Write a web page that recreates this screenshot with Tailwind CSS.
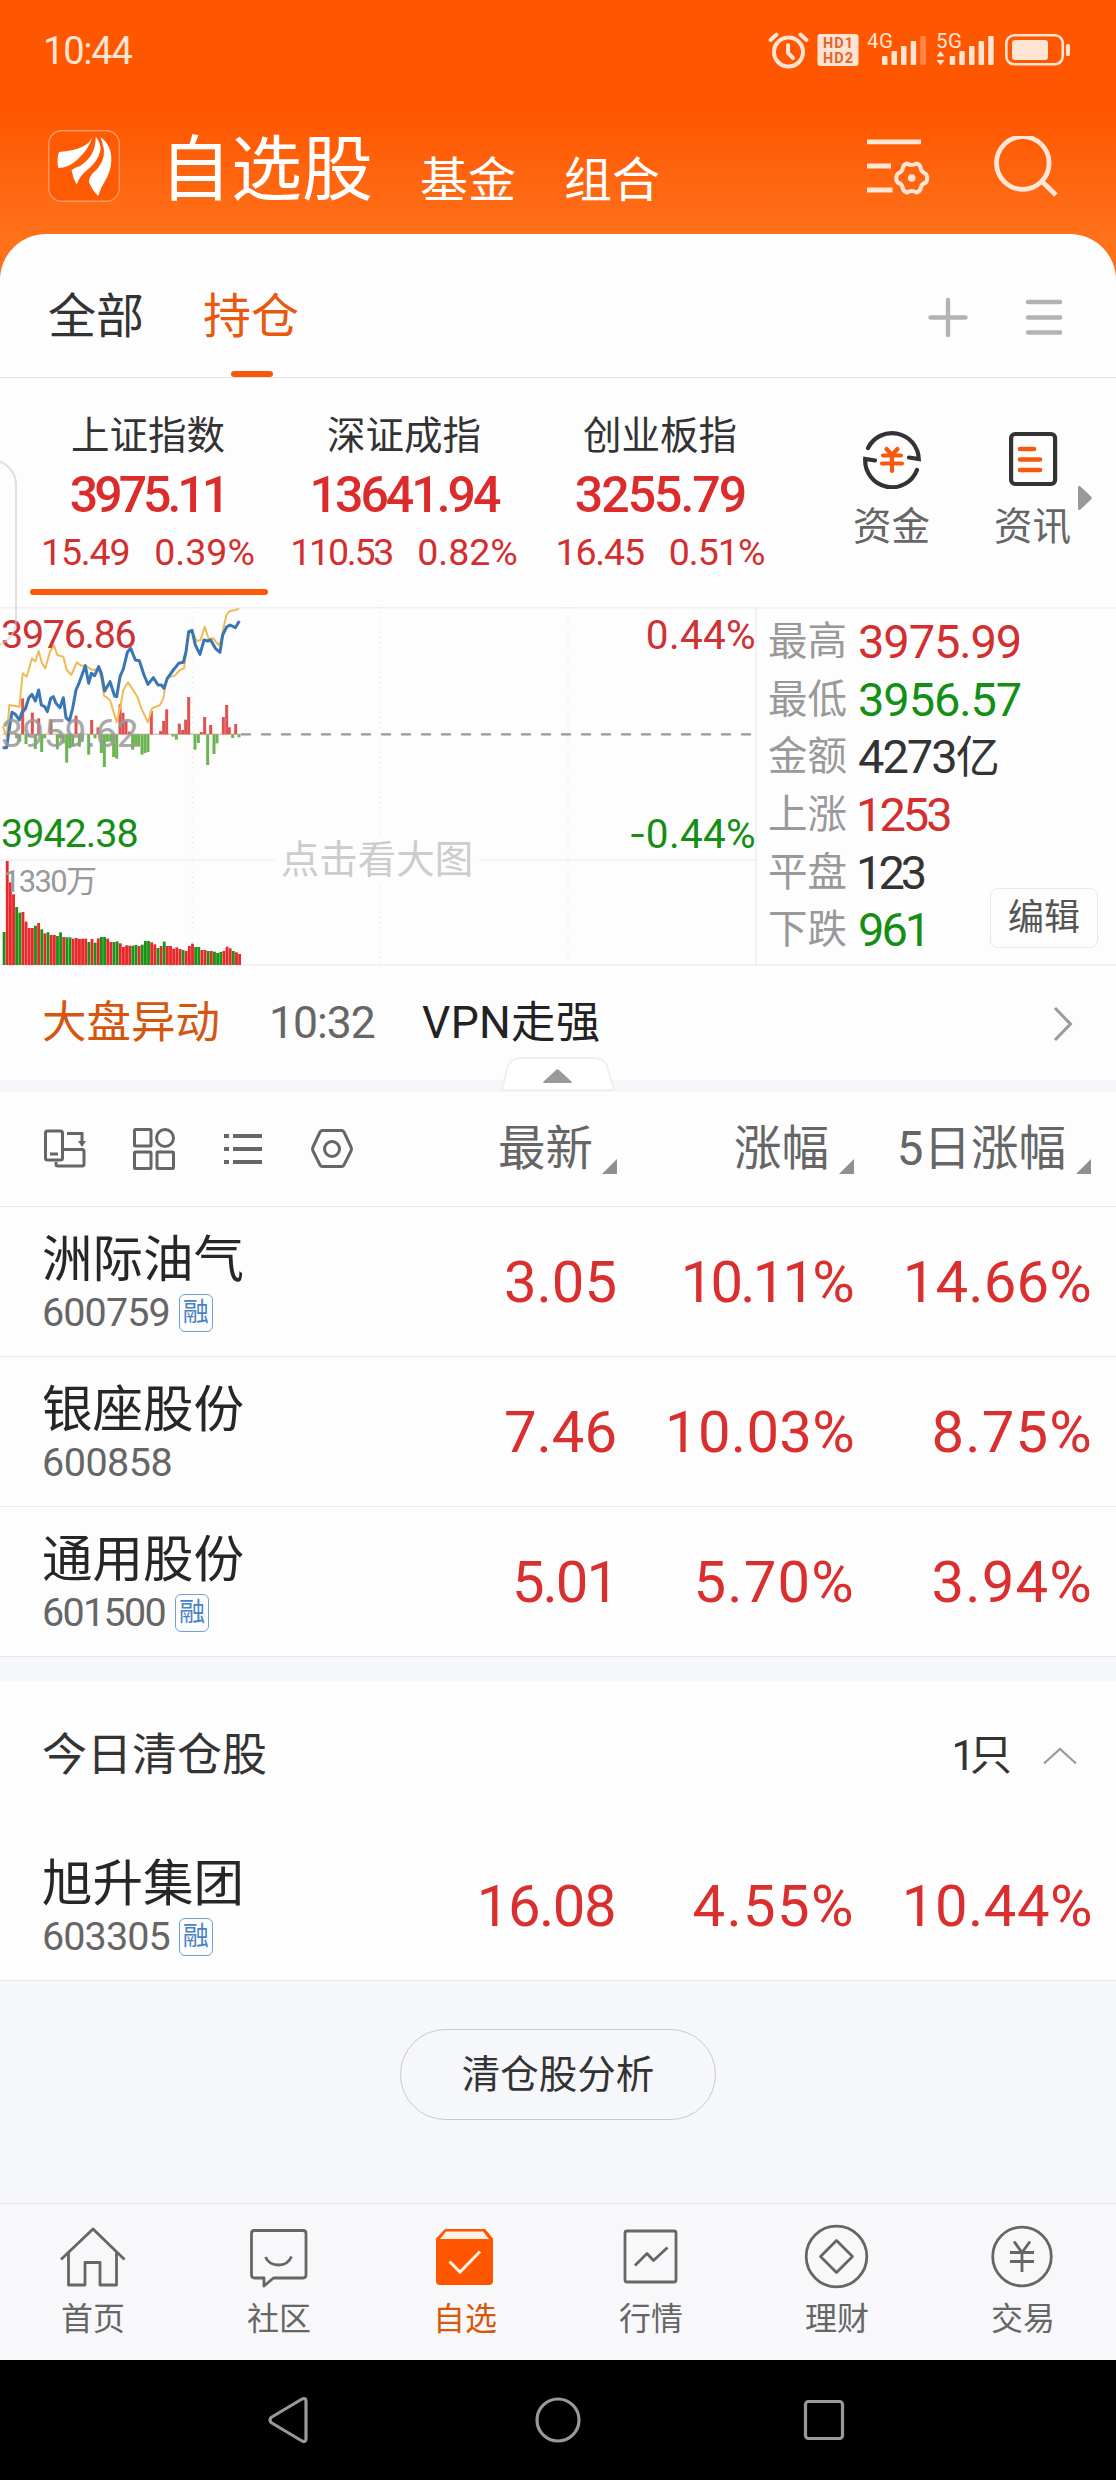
<!DOCTYPE html>
<html lang="zh-CN">

<head>
    <meta charset="UTF-8" />
    <meta name="viewport" content="width=device-width, initial-scale=1.0" />
    <title>自选股</title>
    <script src="https://cdn.jsdelivr.net/npm/@tailwindcss/browser@4"></script>
</head>

<body class="w-[1116px] h-[2480px] overflow-hidden bg-white text-[#333] font-['Roboto','Noto_Sans_CJK_SC',sans-serif] whitespace-nowrap">

    <!-- Header -->
    <header class="h-[280px] bg-linear-to-b from-[#ff5600] from-40% to-[#ff7119] to-85%">
        <div class="h-[100px] pl-[43px] pr-[45px] flex items-center justify-between text-[#ffe3d3]">
            <span class="pt-[2px] text-[38px] leading-[100px] tracking-[-1.2px]">10:44</span>
            <svg class="w-[304px] h-[40px]" viewBox="768 29 304 40" fill="none">
                <g stroke="#ffe3d3" stroke-width="4" stroke-linecap="round" stroke-linejoin="round">
                    <circle cx="789.5" cy="51" r="14.5" />
                    <path d="M789 44v8l5 5" />
                    <path d="M771.500 39l6-5.500M807.500 39l-6-5.500" />
                </g>
                <rect x="818.500" y="33" width="41" height="32" rx="3" fill="#ffe3d3" />
                <g fill="#e8632a" font-family="Roboto" font-weight="700" font-size="14.500">
                    <text x="824" y="47" textLength="30">HD1</text>
                    <text x="824" y="61.500" textLength="30">HD2</text>
                </g>
                <g fill="#ffe3d3">
                    <text x="868" y="46.500" font-family="Roboto" font-size="20.500" textLength="26">4G</text>
                    <text x="937" y="46.500" font-family="Roboto" font-size="20.500" textLength="26">5G</text>
                    <rect x="883" y="55" width="5.500" height="9" rx="1" />
                    <rect x="892.500" y="50" width="5.500" height="14" rx="1" />
                    <rect x="902" y="45" width="5.500" height="19" rx="1" />
                    <rect x="911.700" y="40" width="5.500" height="24" rx="1" />
                    <rect x="921.400" y="35" width="5.500" height="29" rx="1" opacity=".35" />
                    <path d="M941.500 50l4 5.500h-8zM941.500 64.500l4-5.500h-8z" />
                    <rect x="950.700" y="55" width="5.500" height="9" rx="1" />
                    <rect x="960.300" y="50" width="5.500" height="14" rx="1" />
                    <rect x="970" y="45" width="5.500" height="19" rx="1" />
                    <rect x="979.600" y="40" width="5.500" height="24" rx="1" />
                    <rect x="989.200" y="35" width="5.500" height="29" rx="1" />
                    <rect x="1013" y="39" width="36" height="20" rx="3" />
                    <rect x="1067" y="43" width="4" height="12" rx="1.500" />
                </g>
                <rect x="1007.300" y="34.300" width="56.500" height="29" rx="8" stroke="#ffe3d3" stroke-width="2.600" />
            </svg>
        </div>
        <div class="h-[134px] pl-[48px] pr-[58px] flex text-white">
            <svg class="mt-[30px] w-[72px] h-[72px]" viewBox="48 130 72 72">
                <rect x="48.700" y="130.700" width="70.600" height="70.600" rx="13" fill="#ff5a04" stroke="#ff9a66" stroke-width="1.400" />
                <g fill="#fff">
                    <path d="M92.500 137Q87 150 59 152Q56.500 159 58.300 168Q68 168 77 160Q89 149 92.500 137Z" />
                    <path d="M95.700 136.500Q101 143 100.500 150Q98 162 86 171Q80 176 76.500 184.500Q73 178 71.500 170Q76 167 80 166Q96 156 95.700 136.500Z" />
                    <path d="M100.300 137Q112 145 111.300 161Q111 171 105 181Q101 187 98.200 196Q92 190 89 182Q89 177 93 173Q105 163 104 150Q103 143 100.300 137Z" />
                </g>
            </svg>
            <h1 class="ml-[40px] mt-[20px] w-[215px] text-[71px] leading-[100px]">自选股</h1>
            <span class="ml-[45px] mt-[31px] text-[48px] leading-[100px]">基金</span>
            <span class="ml-[48px] mt-[31px] text-[48px] leading-[100px]">组合</span>
            <svg class="ml-auto mt-[36px] w-[192px] h-[64px]" viewBox="866 136 192 64" fill="none" stroke="#ffe6d6" stroke-width="4.800">
                <path d="M867 141.800h54M867 166h24M867 190h25.500" />
                <path d="M907 163.500Q911.700 166.500 916.500 163.500Q920.500 164.500 921 169.500Q922 172 926 174Q928.500 178 926 182.500Q921.500 184 921 187Q920.500 191.500 916.500 192.500Q911.700 189.500 907 192.500Q903 191.500 902.500 187Q902 184 897.500 182.500Q895 178 897.500 174Q901.500 172 902.500 169.500Q903 164.500 907 163.500Z" stroke-width="4" stroke-linejoin="round" />
                <circle cx="911.700" cy="178" r="3.800" fill="#ffe6d6" stroke="none" />
                <circle cx="1022.800" cy="163" r="26.300" />
                <path d="M1042 181.500l14 13.500" />
            </svg>
        </div>
    </header>

    <main class="-mt-[46px] h-[1969px] relative bg-[#fdfdfe] rounded-t-[46px]">
        <!-- Group tabs -->
        <nav class="h-[144px] pl-[48px] pr-[54px] flex border-b border-[#e3e3e3]">
            <span class="mt-[33px] text-[48px] leading-[100px]">全部</span>
            <div class="ml-[59px] relative text-[#e8590f]">
                <span class="block mt-[33px] text-[48px] leading-[100px]">持仓</span>
                <i class="absolute left-[28px] top-[137px] w-[42px] h-[6px] rounded-full bg-[#f55a0c]"></i>
            </div>
            <svg class="ml-auto mt-[63px] w-[134px] h-[40px]" viewBox="928 297 134 40" fill="none" stroke="#b3b3b3" stroke-width="4.400" stroke-linecap="round">
                <path d="M930.500 317.500h35M948 300v35M1028 302h32M1028 317.500h32M1028 332.500h32" />
            </svg>
        </nav>

        <!-- Indices -->
        <section class="h-[228px] pl-[20px] flex text-center text-[#d32f2f]">
            <div class="w-[256px] relative">
                <h3 class="mt-[33px] text-[38.500px] leading-[50px] text-[#333]">上证指数</h3>
                <p class="mt-[7px] text-[50px] leading-[54px] font-medium tracking-[-4px] text-[#dc2b2b]">3975.11</p>
                <p class="mt-[10px] flex justify-center gap-[25px] text-[37.500px] leading-[40px]"><span class="tracking-[-1.200px]">15.49</span><span>0.39%</span></p>
                <i class="absolute left-[10px] bottom-[11px] w-[238px] h-[6px] rounded-full bg-[#fb5a0b]"></i>
            </div>
            <div class="w-[256px]">
                <h3 class="mt-[33px] text-[38.500px] leading-[50px] text-[#333]">深证成指</h3>
                <p class="mt-[7px] text-[50px] leading-[54px] font-medium tracking-[-3px] text-[#dc2b2b]">13641.94</p>
                <p class="mt-[10px] flex justify-center gap-[25px] text-[37.500px] leading-[40px]"><span class="tracking-[-2.200px]">110.53</span><span>0.82%</span></p>
            </div>
            <div class="w-[256px]">
                <h3 class="mt-[33px] text-[38.500px] leading-[50px] text-[#333]">创业板指</h3>
                <p class="mt-[7px] text-[50px] leading-[54px] font-medium tracking-[-2px] text-[#dc2b2b]">3255.79</p>
                <p class="mt-[10px] flex justify-center gap-[25px] text-[37.500px] leading-[40px]"><span class="tracking-[-1.200px]">16.45</span><span class="tracking-[-1px]">0.51%</span></p>
            </div>
            <div class="ml-[33px] w-[141px] text-[#666]">
                <svg class="mx-auto mt-[51px] w-[60px] h-[60px]" viewBox="862 429 60 60" fill="none" stroke="#333" stroke-width="4.200">
                    <path d="M868 448A26.800 26.800 0 0 1 918.800 459L909 457.500" stroke-linecap="round" />
                    <path d="M917 470A26.800 26.800 0 0 1 865.200 459L875 460.500" stroke-linecap="round" />
                    <path d="M886.500 449l5.500 6 5.500-6M883 455.500h18M882 463.500h20M892 455v16" stroke="#f55a0c" stroke-linecap="round" />
                </svg>
                <p class="mt-[13px] text-[38.500px] leading-[50px]">资金</p>
            </div>
            <div class="w-[141px] relative text-[#666]">
                <svg class="mx-auto mt-[51px] w-[60px] h-[60px]" viewBox="1003 429 60 60" fill="none" stroke="#333" stroke-width="4.200">
                    <rect x="1011.100" y="434" width="44" height="50" rx="4" />
                    <path d="M1020 449h14M1020 459.500h20M1020 470h20" stroke="#f55a0c" stroke-width="4.600" stroke-linecap="round" />
                </svg>
                <p class="mt-[13px] text-[38.500px] leading-[50px]">资讯</p>
                <svg class="absolute left-[115px] top-[107px] w-[16px] h-[26px]" viewBox="0 0 16 26"><path d="M1 2Q2 0 4 2L14 11.500Q15.500 13 14 14.500L4 24Q2 26 1 24Z" fill="#999" /></svg>
            </div>
        </section>

        <!-- Intraday chart and market stats -->
        <section class="h-[360px] flex">
            <div class="relative w-[757px]">
                <svg class="absolute left-0 top-px w-[757px] h-[359px]" viewBox="0 36 2271 1077" fill="none">
                    <g stroke="#f0f0f2" stroke-width="5">
                        <path d="M0 38H2271M0 795H2271M0 1110H2271M2268 36V1113" />
                        <path d="M577 36V1110M1141 36V1110M1704 36V1110" stroke-width="4" stroke-dasharray="3 12" stroke="#e6e6ea" />
                    </g>
                    <path d="M723 418H2256" stroke="#999" stroke-width="7" stroke-dasharray="30 30" />
                    <g id="flow"></g>
                    <path stroke="#edbc55" stroke-width="6" stroke-linejoin="round" d="M8 395L20 425L28 330L58 335L68 235L80 245L96 190L106 200L116 168L126 205L136 220L150 170L162 152L172 180L190 185L200 225L214 240L230 202L244 212L256 212L276 225L296 222L304 250L312 302L330 315L350 382L362 330L370 285L384 262L396 280L412 305L424 340L444 382L456 340L480 330L490 310L498 262L504 248L524 242L540 225L552 220L558 175L566 115L576 106L590 138L602 135L614 95L626 132L640 130L655 150L662 140L670 100L680 58L690 48L706 45L718 41" />
                    <path stroke="#3a75b4" stroke-width="9" stroke-linejoin="round" d="M8 458L20 458L28 400L36 352L46 358L58 375L66 352L76 342L86 310L96 298L106 318L116 285L124 330L134 335L142 350L152 310L160 305L168 325L180 338L190 308L198 368L208 378L218 340L228 285L238 262L256 212L266 265L274 235L284 242L296 215L304 235L314 288L330 260L344 303L350 305L360 245L370 222L382 172L392 160L406 195L418 197L432 240L444 268L460 248L474 270L484 270L492 280L502 250L520 225L536 205L550 202L558 170L566 110L576 106L586 150L600 178L612 135L624 138L632 135L646 160L660 172L668 120L680 96L690 90L706 98L718 78" />
                    <g id="volume"></g>
                </svg>
                <div class="absolute inset-x-0 top-[9px] pl-px pr-px flex justify-between text-[39.500px] leading-[40px] text-[#cf3232]"><span class="tracking-[-1.300px]">3976.86</span><span class="text-[40.500px] tracking-[0.3px]">0.44%</span></div>
                <div class="absolute left-px top-[108px] text-[39.500px] leading-[40px] tracking-[-1px] text-[#999]/85">3959.62</div>
                <div class="absolute inset-x-0 top-[208px] pl-px pr-px flex justify-between text-[39.500px] leading-[40px] text-[#148f14]"><span class="tracking-[-1px]">3942.38</span><span class="text-[40.500px] tracking-[0.3px]"><span class="inline-block mr-[2px] scale-x-125">-</span>0.44%</span></div>
                <div class="absolute left-[3px] top-[256px] text-[31px] leading-[40px] tracking-[-1.700px] text-[#999]">1330万</div>
                <div class="absolute left-[275px] top-[229px] w-[204px] bg-[#fdfdfe] text-center text-[38.500px] leading-[50px] text-[#ccc]">点击看大图</div>
            </div>
            <div class="relative grow mt-px pt-[4px] pl-[11px] text-[47px] leading-[57px] border-y-2 border-[#f2f2f4]">
                <p class="h-[57.700px] flex text-[#d32f2f]"><span class="w-[90px] text-[39.500px] text-[#999]">最高</span><span class="tracking-[-1.100px]">3975.99</span></p>
                <p class="h-[57.700px] flex text-[#148f14]"><span class="w-[90px] text-[39.500px] text-[#999]">最低</span><span class="tracking-[-1.100px]">3956.57</span></p>
                <p class="h-[57.700px] flex"><span class="w-[90px] text-[39.500px] text-[#999]">金额</span><span class="tracking-[-2px]">4273<span class="text-[44px]">亿</span></span></p>
                <p class="h-[57.700px] flex text-[#d32f2f]"><span class="w-[90px] text-[39.500px] text-[#999]">上涨</span><span class="-ml-[2px] tracking-[-3px]">1253</span></p>
                <p class="h-[57.700px] flex"><span class="w-[90px] text-[39.500px] text-[#999]">平盘</span><span class="-ml-[2px] tracking-[-4px]">123</span></p>
                <p class="h-[57.700px] flex text-[#148f14]"><span class="w-[90px] text-[39.500px] text-[#999]">下跌</span><span class="tracking-[-3px]">961</span></p>
                <button class="absolute right-[18px] bottom-[16px] w-[108px] h-[60px] rounded-lg border border-[#e8e8ea] text-[36px] leading-[59px] text-[#555]">编辑</button>
            </div>
        </section>

        <!-- Market news -->
        <section class="relative h-[114px] pl-[42px] pr-[43px] flex text-[44.500px] leading-[114px]">
            <span class="text-[#d4560f]">大盘异动</span>
            <span class="ml-[49px] w-[153px] tracking-[-1px] text-[#666]">10:32</span>
            <span class="text-[#222] tracking-[0.3px]">VPN走强</span>
            <svg class="ml-auto mt-[40px] w-[20px] h-[36px]" viewBox="0 0 20 36" fill="none" stroke="#999" stroke-width="3"><path d="M2 2l15.500 16L2 34" /></svg>
            <svg class="absolute z-10 left-[501px] top-[91px] w-[114px] h-[34px]" viewBox="0 0 114 34">
                <path d="M1 33L6 12Q9 1 20 1H93Q104 1 107 12L113 33Z" fill="#fff" stroke="#efeff2" stroke-width="2" />
                <path d="M42 25L55 13Q56.500 11.500 58 13L71 25Q71 26 69 26H44Q42 26 42 25Z" fill="#999" />
            </svg>
        </section>
        <div class="h-[12px] bg-[#f5f6f9]"></div>

        <!-- List toolbar -->
        <section class="h-[115px] pl-[43px] flex border-b border-[#e9e9eb] text-[47.500px] leading-[115px] text-[#666]">
            <svg class="mt-[35px] w-[312px] h-[44px]" viewBox="43 1127 312 44" fill="none" stroke="#666" stroke-width="3">
                <rect x="45.500" y="1131" width="17" height="29" rx="2" />
                <path d="M50 1154h8M56 1162v2.500Q56 1166 58 1166H82Q84 1166 84 1164V1151.500Q84 1149.500 82 1149.500H64M67 1133.500H82V1143" />
                <path d="M78 1141h8l-4 6z" fill="#666" stroke="none" />
                <rect x="134.500" y="1129.500" width="16.500" height="16.500" rx="1" />
                <circle cx="165" cy="1138" r="8.500" />
                <rect x="134.500" y="1152" width="16.500" height="16.500" rx="1" />
                <rect x="157" y="1152" width="16.500" height="16.500" rx="1" />
                <path d="M233 1136H262M233 1149H262M233 1162H262M224 1136h5M224 1149h5M224 1162h5" stroke-width="4" />
                <path d="M322.500 1130.500H341.500Q343 1130.500 344 1132L351 1147Q352 1149 351 1151L344 1165Q343 1166.500 341.500 1166.500H322.500Q321 1166.500 320 1165L313 1151Q312 1149 313 1147L320 1132Q321 1130.500 322.500 1130.500Z" />
                <circle cx="332" cy="1149" r="7.500" />
            </svg>
            <div class="w-[262px] flex justify-end"><span>最新</span><svg class="ml-[9px] mt-[67px] w-[15px] h-[15px]" viewBox="0 0 15 15"><path d="M15 0V15H0Z" fill="#8e8e93" /></svg></div>
            <div class="w-[237px] flex justify-end"><span>涨幅</span><svg class="ml-[10px] mt-[67px] w-[15px] h-[15px]" viewBox="0 0 15 15"><path d="M15 0V15H0Z" fill="#8e8e93" /></svg></div>
            <div class="w-[237px] flex justify-end"><span>5日涨幅</span><svg class="ml-[10px] mt-[67px] w-[15px] h-[15px]" viewBox="0 0 15 15"><path d="M15 0V15H0Z" fill="#8e8e93" /></svg></div>
        </section>

        <!-- Holdings -->
        <section class="text-[58px] text-right text-[#d92f2f]">
            <div class="h-[150px] pl-[42px] flex border-b border-[#e9e9eb] leading-[150px]">
                <div class="w-[338px] text-left">
                    <h2 class="mt-[23px] text-[50.500px] leading-[60px] text-[#262626]">洲际油气</h2>
                    <p class="flex items-center gap-[9px] text-[39.500px] leading-[46px] tracking-[-0.9px] text-[#666]">600759<span class="w-[34px] h-[38px] rounded-md border-[1.5px] border-[#6fa3d4] text-center text-[26px] leading-[34px] tracking-normal text-[#4584c4]">融</span></p>
                </div>
                <span class="w-[237px]">3.05</span><span class="w-[235px] tracking-[-2.800px]">10.11%</span><span class="w-[240px] tracking-[0.2px]">14.66%</span>
            </div>
            <div class="h-[150px] pl-[42px] flex border-b border-[#e9e9eb] leading-[150px]">
                <div class="w-[338px] text-left">
                    <h2 class="mt-[23px] text-[50.500px] leading-[60px] text-[#262626]">银座股份</h2>
                    <p class="text-[39.500px] leading-[46px] tracking-[-0.5px] text-[#666]">600858</p>
                </div>
                <span class="w-[237px]">7.46</span><span class="w-[238px] tracking-[0.3px]">10.03%</span><span class="w-[238px] tracking-[1.200px]">8.75%</span>
            </div>
            <div class="h-[150px] pl-[42px] flex border-b border-[#e9e9eb] leading-[150px]">
                <div class="w-[338px] text-left">
                    <h2 class="mt-[23px] text-[50.500px] leading-[60px] text-[#262626]">通用股份</h2>
                    <p class="flex items-center gap-[10px] text-[39.500px] leading-[46px] tracking-[-1.700px] text-[#666]">601500<span class="w-[34px] h-[38px] rounded-md border-[1.5px] border-[#6fa3d4] text-center text-[26px] leading-[34px] tracking-normal text-[#4584c4]">融</span></p>
                </div>
                <span class="w-[237px] tracking-[-2px]">5.01</span><span class="w-[238px] tracking-[1.200px]">5.70%</span><span class="w-[238px] tracking-[1.200px]">3.94%</span>
            </div>

            <div class="h-[24px] bg-[#f6f7fa]"></div>

            <!-- Closed today -->
            <div class="h-[149px] pl-[42px] pr-[39px] flex text-[45px] leading-[150px] text-[#333]">
                <span>今日清仓股</span>
                <span class="ml-auto text-[42px] tracking-[-5px]">1只</span>
                <svg class="ml-[36px] mt-[66px] w-[34px] h-[18px]" viewBox="0 0 34 18" fill="none" stroke="#999" stroke-width="2.200"><path d="M1 16.500L17 2L33 16.500" /></svg>
            </div>
            <div class="h-[151px] pl-[42px] flex border-b border-[#e6e7ea] leading-[152px]">
                <div class="w-[338px] text-left">
                    <h2 class="mt-[24px] text-[50.500px] leading-[60px] text-[#262626]">旭升集团</h2>
                    <p class="flex items-center gap-[9px] text-[39.500px] leading-[46px] tracking-[-0.9px] text-[#666]">603305<span class="w-[34px] h-[38px] rounded-md border-[1.5px] border-[#6fa3d4] text-center text-[26px] leading-[34px] tracking-normal text-[#4584c4]">融</span></p>
                </div>
                <span class="w-[235px] tracking-[-1.500px]">16.08</span><span class="w-[240px] tracking-[1.400px]">4.55%</span><span class="w-[238px] tracking-[0.5px]">10.44%</span>
            </div>
        </section>
        <section class="h-[222px] pt-[48px] bg-[#f6f7fa]">
            <button class="block mx-auto w-[316px] h-[91px] rounded-full border border-[#c9c9cc] text-[38.500px] leading-[87px] text-[#333]">清仓股分析</button>
        </section>

        <!-- Side drawer handle -->
        <i class="absolute -left-[20px] top-[225px] w-[37px] h-[188px] rounded-r-[26px] border-2 border-[#ccc]/60"></i>
    </main>

    <!-- Bottom tabs -->
    <nav class="h-[157px] grid grid-cols-6 border-t border-[#e2e3e5] bg-[#f8f8fa] text-center text-[32px] leading-[40px] text-[#666]">
        <div>
            <svg class="mx-auto mt-[20px] w-[66px] h-[66px]" viewBox="60 2224 66 66" fill="none" stroke="#666" stroke-width="2.800"><path d="M61 2259.500L93 2229L124.500 2259.500M68.500 2253V2285H85V2262.500H100V2285H116.500V2253" stroke-linejoin="round" /></svg>
            <p class="mt-[9px]">首页</p>
        </div>
        <div>
            <svg class="mx-auto mt-[20px] w-[66px] h-[66px]" viewBox="246 2224 66 66" fill="none" stroke="#666" stroke-width="2.800"><path d="M254.500 2230.500H303Q306 2230.500 306 2233.500V2275Q306 2278 303 2278H273.500L264 2286V2278H254.500Q251.500 2278 251.500 2275V2233.500Q251.500 2230.500 254.500 2230.500ZM265.500 2257Q269 2265 278.500 2265Q288 2265 291.500 2256.500" stroke-linejoin="round" /></svg>
            <p class="mt-[9px]">社区</p>
        </div>
        <div class="text-[#d9560f]">
            <svg class="mx-auto mt-[20px] w-[66px] h-[66px]" viewBox="432 2224 66 66" fill="none"><path d="M445 2229H485L493 2238.500V2281Q493 2285 489 2285H440Q436 2285 436 2281V2238.500Z" fill="#ff5600" /><path d="M446 2231.500H483L489 2239H440Z" fill="#fff0e8" /><path d="M449.500 2261.500L460 2272L480 2251.500" stroke="#fff0e0" stroke-width="3" /></svg>
            <p class="mt-[9px]">自选</p>
        </div>
        <div>
            <svg class="mx-auto mt-[20px] w-[66px] h-[66px]" viewBox="618 2224 66 66" fill="none" stroke="#666" stroke-width="2.800"><rect x="625" y="2231" width="51" height="51" rx="2" /><path d="M635 2265.500L647 2253.500L653.500 2260.500L667.500 2247.500" stroke-linejoin="round" /></svg>
            <p class="mt-[9px]">行情</p>
        </div>
        <div>
            <svg class="mx-auto mt-[20px] w-[66px] h-[66px]" viewBox="804 2224 66 66" fill="none" stroke="#666" stroke-width="2.800"><circle cx="836.500" cy="2256.500" r="30.300" /><path d="M836.500 2240.500L852.500 2256.500L836.500 2272.500L820.500 2256.500Z" stroke-linejoin="round" /></svg>
            <p class="mt-[9px]">理财</p>
        </div>
        <div>
            <svg class="mx-auto mt-[20px] w-[66px] h-[66px]" viewBox="990 2224 66 66" fill="none" stroke="#666" stroke-width="2.800"><circle cx="1022" cy="2256.500" r="29.300" /><path d="M1014 2241.500L1022 2252.500L1030 2241.500M1010 2252.500H1034M1010 2261.500H1034M1022 2252V2272" /></svg>
            <p class="mt-[9px]">交易</p>
        </div>
    </nav>

    <!-- System navigation -->
    <footer class="h-[120px] bg-black">
        <svg class="w-[1116px] h-[120px]" viewBox="0 0 1116 120" fill="none" stroke="#999" stroke-width="3.200" stroke-linejoin="round">
            <path d="M271 57.500L302 39Q306 37.500 306 41V79Q306 82.500 302 81L271 62.500Q269 60 271 57.500Z" />
            <circle cx="558" cy="60" r="21" />
            <rect x="805.500" y="41.500" width="37" height="37" rx="3" />
        </svg>
    </footer>

    <script>
        const RED = "#e8292b";
        const GREEN = "#1a9417";
        const NS = "http://www.w3.org/2000/svg";

        function bar(parent, x, y, w, h, fill) {
            const r = document.createElementNS(NS, "rect");
            r.setAttribute("x", x);
            r.setAttribute("y", y);
            r.setAttribute("width", w);
            r.setAttribute("height", h);
            r.setAttribute("fill", fill);
            parent.appendChild(r);
        }

        // inflow above the zero line, outflow below it
        const inflow = [[68, 310], [97, 353], [116, 370], [153, 375], [228, 362], [275, 375], [294, 397], [360, 328], [369, 353], [378, 378], [388, 410], [454, 348], [482, 408], [491, 378], [500, 343], [538, 386], [548, 405], [557, 374], [566, 306], [604, 411], [614, 366], [632, 390], [670, 366], [680, 330], [688, 397], [707, 387]];
        const outflow = [[50, 430], [59, 440], [78, 447], [88, 425], [106, 462], [125, 471], [134, 430], [172, 463], [181, 430], [190, 445], [200, 503], [209, 460], [218, 455], [238, 455], [247, 440], [266, 479], [285, 430], [304, 474], [313, 516], [322, 440], [332, 440], [341, 486], [350, 491], [398, 464], [407, 450], [416, 455], [426, 479], [435, 474], [444, 471], [519, 425], [529, 434], [585, 464], [595, 444], [623, 510], [642, 477], [651, 445], [698, 429], [717, 427]];
        const flow = document.getElementById("flow");
        bar(flow, 8, 416, 714, 3, "#d9a0a0");
        inflow.forEach(([x, y]) => bar(flow, x - 4.5, y, 9, 418 - y, "#e0524f"));
        outflow.forEach(([x, y]) => bar(flow, x - 4.5, 418, 9, y - 418, "#6ab552"));

        const tops = [1011, 798, 862, 898, 936, 953, 951, 980, 999, 999, 992, 984, 1003, 1015, 1012, 1020, 1020, 1023, 1012, 1026, 1027, 1027, 1031, 1029, 1032, 1031, 1031, 1041, 1032, 1043, 1030, 1026, 1026, 1031, 1041, 1041, 1039, 1045, 1056, 1051, 1052, 1052, 1050, 1053, 1049, 1038, 1038, 1042, 1048, 1059, 1053, 1040, 1053, 1053, 1061, 1057, 1062, 1065, 1068, 1053, 1046, 1056, 1056, 1065, 1065, 1068, 1068, 1070, 1074, 1071, 1068, 1055, 1060, 1068, 1072, 1077];
        const sides = "grrrggrrrrgrgrgrrggrggrrrrrgrgrggrrggrrrrggrgggrrgrgrrrrrgrrrggrrgrgggrrrgrr";
        const volume = document.getElementById("volume");
        tops.forEach((y, i) => bar(volume, 8 + i * 9.42, y, 8.6, 1110 - y, sides[i] === "r" ? RED : GREEN));
    </script>
</body>

</html>
